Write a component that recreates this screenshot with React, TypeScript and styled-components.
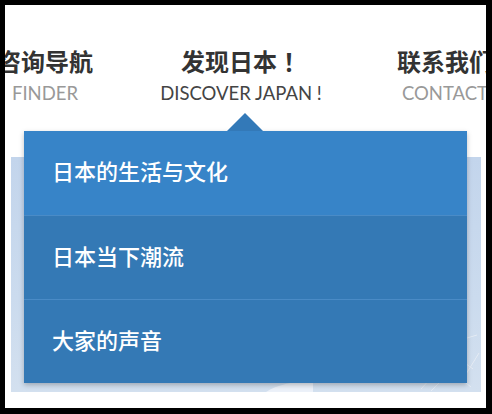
import React from "react";
import styled, { createGlobalStyle } from "styled-components";

const GlobalStyle = createGlobalStyle`
  html, body {
    margin: 0;
    padding: 0;
    background: #000;
  }
  body {
    font-family: "Noto Sans CJK SC", "Noto Sans", sans-serif;
  }
`;

type NavItem = {
  title: string;
  bang?: boolean;
  sub: string;
  width: number;
  active?: boolean;
};

const navItems: NavItem[] = [
  { title: "咨询导航", sub: "FINDER", width: 192 },
  { title: "发现日本", bang: true, sub: "DISCOVER JAPAN !", width: 200, active: true },
  { title: "联系我们", sub: "CONTACT", width: 208 },
];

const menuItems = ["日本的生活与文化", "日本当下潮流", "大家的声音"];

const App = () => {
  return (
    <>
      <GlobalStyle />
      <Frame>
        <Nav>
          {navItems.map((item) => (
            <NavLink key={item.sub} $width={item.width}>
              <NavTitle>
                {item.title}
                {item.bang && <Bang>！</Bang>}
              </NavTitle>
              <NavSub $active={item.active}>{item.sub}</NavSub>
            </NavLink>
          ))}
        </Nav>
        <Banner>
          <svg width="470" height="235" viewBox="0 0 470 235">
            <path
              d="M255 235 C265 228 284 224 302 223 L302 235 Z"
              fill="#eef3f9"
              opacity="0.9"
            />
            <g stroke="#e8eef6" strokeWidth="1" fill="none" opacity="0.9">
              <path d="M410 232 L432 208 L452 222 L468 196" />
              <path d="M420 234 L440 214 L460 230" />
              <path d="M428 220 L446 200 L462 212" />
              <path d="M402 196 L418 186 M424 182 L440 176 M446 184 L466 178" />
            </g>
          </svg>
        </Banner>
        <Dropdown>
          <Caret />
          {menuItems.map((label, i) => (
            <MenuItem key={label} $first={i === 0}>
              {label}
            </MenuItem>
          ))}
        </Dropdown>
      </Frame>
    </>
  );
};

export default App;

const Frame = styled.div`
  position: relative;
  margin: 5px 0 0 5px;
  width: 481px;
  height: 403px;
  background: #fff;
  overflow: hidden;
`;

const Nav = styled.div`
  display: flex;
  justify-content: center;
  margin-left: 7px;
  padding-top: 41px;
`;

const NavLink = styled.div<{ $width: number }>`
  flex: 0 0 ${(p) => p.$width}px;
  display: flex;
  flex-direction: column;
  align-items: center;
  white-space: nowrap;
`;

const NavTitle = styled.div`
  font-family: "Noto Sans CJK SC", sans-serif;
  font-size: 24px;
  font-weight: 700;
  line-height: 30px;
  color: #333;
`;

const Bang = styled.span`
  display: inline-block;
  width: 1em;
  text-align: center;
  font-family: "Noto Sans CJK JP", "Noto Sans CJK SC", sans-serif;
`;

const NavSub = styled.div<{ $active?: boolean }>`
  margin-top: 5px;
  font-family: Lato, "Liberation Sans", sans-serif;
  font-size: 18.5px;
  line-height: 24px;
  color: ${(p) => (p.$active ? "#444" : "#999")};
`;

const Banner = styled.div`
  margin: 52px 5px 0 6px;
  height: 235px;
  background: linear-gradient(180deg, #c3d5ec 0%, #cbdbee 60%, #d3e0ef 100%);
  svg {
    display: block;
  }
`;

const Dropdown = styled.div`
  position: absolute;
  left: 19px;
  top: 126px;
  width: 443px;
  display: flex;
  flex-direction: column;
  box-shadow: 0 2px 5px rgba(0, 0, 0, 0.25);
`;

const Caret = styled.div`
  position: absolute;
  top: -18px;
  left: 203px;
  width: 0;
  height: 0;
  border-left: 18px solid transparent;
  border-right: 18px solid transparent;
  border-bottom: 18px solid #3379b8;
`;

const MenuItem = styled.div<{ $first?: boolean }>`
  height: 84px;
  box-sizing: border-box;
  display: flex;
  align-items: center;
  padding: 0 0 6px 28px;
  font-family: "Noto Sans CJK SC", sans-serif;
  font-size: 22px;
  font-weight: 500;
  color: #fff;
  background: ${(p) => (p.$first ? "#3784c8" : "#3479b5")};
  border-top: ${(p) => (p.$first ? "none" : "1px solid #4a8bc6")};
`;
